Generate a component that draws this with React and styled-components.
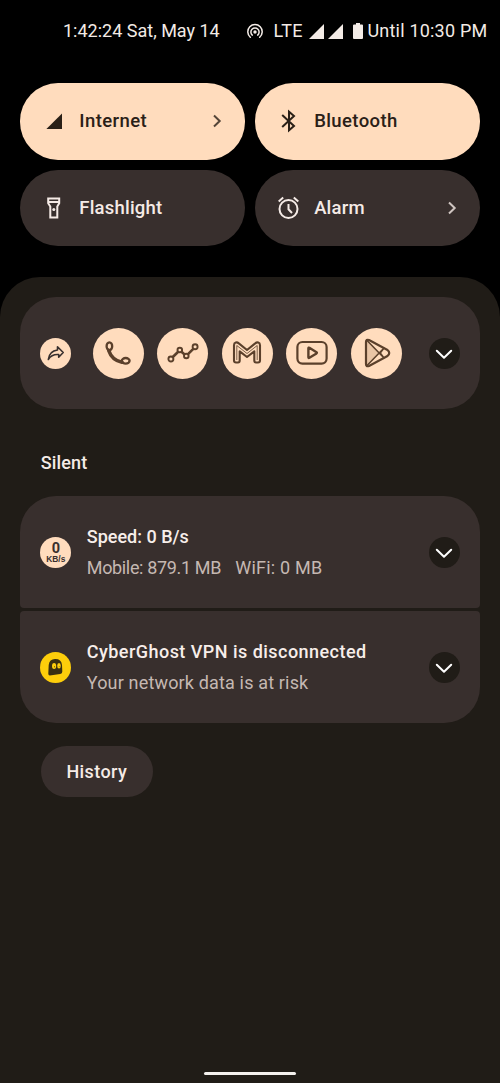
import styled, { createGlobalStyle } from "styled-components"

const GlobalStyle = createGlobalStyle`
*{
 box-sizing:border-box;
}
body{
 margin:0;
 background:#000;
 font-family:Roboto, "Liberation Sans", sans-serif;
}
svg{
 display:block;
 flex:none;
}
`
const Screen = styled.div`
width:500px;
height:1083px;
display:flex;
flex-direction:column;
overflow:hidden;
background:#000;
`
const StatusBar = styled.div`
height:62px;
padding:0 12px 0 63px;
display:flex;
align-items:center;
color:#f3ebe6;
`
const StatusText = styled.span`
width:${p => p.$width}px;
flex:none;
margin-right:${p => p.$gap || 0}px;
font-size:18px;
line-height:24px;
white-space:nowrap;
letter-spacing:${p => p.$spacing || 0}px;
`
const StatusIcons = styled.div`
display:flex;
align-items:center;
gap:4px;
margin-right:${p => p.$gap}px;
`
const Tiles = styled.div`
padding:21.3px 20.3px 0;
display:grid;
grid-template-columns:1fr 1fr;
grid-auto-rows:76.3px;
gap:10.3px;
`
const Tile = styled.button`
border:none;
border-radius:38px;
padding:0 22px 0 21.5px;
display:flex;
align-items:center;
font-family:inherit;
text-align:left;
background:${p => p.$active ? "#ffdcbd" : "#382f2d"};
color:${p => p.$active ? "#2a2017" : "#f5ebe6"};
`
const TileLabel = styled.span`
flex:1;
margin-left:13.5px;
font-size:18.5px;
font-weight:500;
line-height:24px;
letter-spacing:${p => p.$spacing || 0}px;
`
const Shade = styled.main`
flex:1;
margin-top:31px;
padding:20px 20.3px 0;
display:flex;
flex-direction:column;
border-radius:40px 40px 0 0;
background:#201c17;
`
const Card = styled.section`
height:112px;
padding:0 20px;
display:flex;
align-items:center;
border-radius:${p => p.$radius};
background:#382f2d;
`
const CardGroup = styled.div`
display:flex;
flex-direction:column;
gap:3px;
`
const Badge = styled.div`
width:31px;
height:31px;
flex:none;
display:flex;
flex-direction:column;
align-items:center;
justify-content:center;
border-radius:50%;
background:${p => p.$color || "#ffdcbd"};
color:#382f2d;
`
const SpeedValue = styled.span`
font-size:14.5px;
font-weight:700;
line-height:13px;
margin-top:2px;
`
const SpeedUnit = styled.span`
font-family:"Liberation Sans", sans-serif;
font-size:8.4px;
font-weight:700;
line-height:9px;
`
const Apps = styled.div`
flex:1;
display:flex;
gap:13.4px;
margin-left:21.7px;
`
const AppIcon = styled.div`
width:51px;
height:51px;
display:flex;
align-items:center;
justify-content:center;
border-radius:50%;
background:#ffdcbd;
color:#5b402b;
`
const Expand = styled.button`
width:31px;
height:31px;
flex:none;
padding:1px 0 0;
border:none;
border-radius:50%;
display:flex;
align-items:center;
justify-content:center;
background:#201c17;
color:#fff;
`
const SectionTitle = styled.h2`
margin:42px 0 0 20.5px;
height:45.3px;
font-size:18px;
font-weight:500;
line-height:24px;
color:#f5ebe6;
letter-spacing:.15px;
`
const Message = styled.div`
flex:1;
margin-left:15.5px;
white-space:nowrap;
`
const Title = styled.p`
margin:0;
font-size:18px;
font-weight:500;
line-height:30.5px;
color:#f7eeea;
letter-spacing:${p => p.$spacing || 0}px;
`
const Body = styled.p`
margin:0;
padding-top:1px;
display:flex;
gap:14px;
font-size:18px;
line-height:30px;
color:#c5b8b2;
letter-spacing:${p => p.$spacing || 0}px;
`
const BodyPart = styled.span`
width:${p => p.$width}px;
letter-spacing:${p => p.$spacing || 0}px;
`
const History = styled.button`
width:112.5px;
height:51px;
margin:22.8px 0 0 20.3px;
padding:0 0 1px;
border:none;
border-radius:26px;
font-family:inherit;
font-size:18px;
font-weight:500;
letter-spacing:.4px;
background:#382f2d;
color:#f5ebe6;
`
const HomeBar = styled.div`
width:92px;
height:3px;
margin:auto auto 8px;
border-radius:2px;
background:#f4f1ee;
`

const HotspotIcon = () => <svg width="18" height="18" viewBox="0 0 18 18" fill="none" stroke="currentColor" strokeWidth="1.5" strokeLinecap="round">
  <circle cx="9" cy="10" r="1.7" fill="currentColor" stroke="none"/>
  <path d="M6.3 13.1A4.1 4.1 0 1 1 11.7 13.1"/>
  <path d="M4.3 15.2A7.2 7.2 0 1 1 13.7 15.2"/>
</svg>

const SignalIcon = () => <svg width="15" height="15" viewBox="0 0 15 15" fill="currentColor">
  <path d="M15 0V15H0Z"/>
</svg>

const BatteryIcon = () => <svg width="10" height="16" viewBox="0 0 10 16" fill="currentColor">
  <path d="M3 0H7V1.5H9Q10 1.5 10 2.5V15Q10 16 9 16H1Q0 16 0 15V2.5Q0 1.5 1 1.5H3Z"/>
</svg>

const TileSignal = () => <svg width="24" height="24" viewBox="0 0 24 24" fill="currentColor">
  <path d="M20 4.6V20H4.4Z"/>
</svg>

const BluetoothIcon = () => <svg width="24" height="24" viewBox="0 0 24 24" fill="none" stroke="currentColor" strokeWidth="2">
  <path d="M5.2 6L17 17L12 21.3V2.7L17 7L5.2 18"/>
</svg>

const FlashlightIcon = () => <svg width="24" height="24" viewBox="0 0 24 24" fill="none" stroke="currentColor" strokeWidth="2">
  <path d="M6.2 2.5H17.2V7.3L15.3 10.5V21.5H8.3V10.5L6.2 7.3ZM6.2 6H17.2"/>
  <circle cx="11.8" cy="13.5" r="1.5" fill="currentColor" stroke="none"/>
</svg>

const AlarmIcon = () => <svg width="24" height="24" viewBox="0 0 24 24" fill="none" stroke="currentColor" strokeWidth="2">
  <circle cx="11.5" cy="13" r="9"/>
  <path d="M11.5 8V13.3L15 17M1.7 5.4L6.2 1.6M16.8 1.6L21.3 5.4"/>
</svg>

const ChevronRight = () => <svg width="12" height="16" viewBox="0 0 12 16" fill="none" stroke="currentColor" strokeWidth="2" opacity="0.8">
  <path d="M3 2.5L8.7 8L3 13.5"/>
</svg>

const ChevronDown = () => <svg width="20" height="14" viewBox="0 0 20 14" fill="none" stroke="currentColor" strokeWidth="2" strokeLinecap="round" strokeLinejoin="round">
  <path d="M2.8 3.7L10 10.7L17.2 3.7"/>
</svg>

const ShareIcon = () => <svg width="20" height="18" viewBox="0 0 20 18" fill="none" stroke="currentColor" strokeWidth="1.6" strokeLinejoin="round">
  <path d="M11.5 2.8L17.2 8.5L12.7 13.2V10.6C8 10.2 4.7 11.7 2.3 15.5C3 9.8 6.4 6.6 11.5 6Z"/>
</svg>

const PhoneIcon = () => <svg width="30" height="30" viewBox="0 0 30 30" fill="none" stroke="currentColor" strokeLinecap="round">
  <ellipse strokeWidth="2.3" cx="6.4" cy="8.3" rx="2.8" ry="3.9"/>
  <ellipse strokeWidth="2.3" cx="22.7" cy="22.8" rx="3.9" ry="2.8"/>
  <path strokeWidth="3.6" d="M5.7 12.5C7.8 18.8 11.7 22.8 19 24.3"/>
</svg>

const ActivityIcon = () => <svg width="32" height="24" viewBox="0 0 32 24" fill="none" stroke="currentColor" strokeWidth="1.9">
  <circle cx="3.9" cy="18" r="2.5"/>
  <circle cx="12.8" cy="9" r="2.3"/>
  <circle cx="19.3" cy="15" r="2.3"/>
  <circle cx="28.1" cy="5.8" r="2.5"/>
  <path strokeWidth="2.6" d="M5.8 16L11.2 10.7M14.5 10.7L17.6 13.4M21 13.2L26.3 7.8"/>
</svg>

const MailIcon = () => <svg width="30" height="26" viewBox="0 0 30 26" fill="none" stroke="currentColor" strokeLinejoin="round">
  <path strokeWidth="2.1" d="M2 5.2C2 2 5 1.8 6.8 3.4L15 10L23.2 3.4C25 1.8 28 2 28 5.2V20.5Q28 22.5 26 22.5H24Q22.3 22.5 22.3 20.5V11.3L15 17L7.7 11.3V20.5Q7.7 22.5 6 22.5H4Q2 22.5 2 20.5Z"/>
  <path strokeWidth="0.8" d="M4.8 20V5.5L15 13.5L25.2 5.5V20"/>
</svg>

const VideoIcon = () => <svg width="32" height="26" viewBox="0 0 32 26" fill="none" stroke="currentColor" strokeWidth="2.2" strokeLinejoin="round">
  <rect x="1.4" y="2" width="29.2" height="21.6" rx="5"/>
  <path strokeWidth="2.4" d="M12.4 8.3Q12.4 7.2 13.4 7.8L20.5 12.2Q21.3 12.8 20.5 13.4L13.4 17.8Q12.4 18.4 12.4 17.3Z"/>
</svg>

const StoreIcon = () => <svg width="32" height="30" viewBox="0 0 32 30" fill="none" stroke="currentColor" strokeWidth="2.2" strokeLinejoin="round" strokeLinecap="round">
  <path fill="#e9c5a5" stroke="none" d="M6 3L18.5 15L6 27Z"/>
  <path d="M6 4Q6 1 9 2L27.5 12Q31 15 27.5 18L9 28Q6 29 6 26Z"/>
  <path strokeWidth="1.6" d="M7 2.5L23.8 19.8M7 27.5L23.8 10.2M23.8 10.2L20.2 15L23.8 19.8"/>
</svg>

const GhostIcon = () => <svg width="17" height="19" viewBox="0 0 17 19">
  <path fill="#382f12" d="M2.8 17.5Q1.3 17.3 1.3 15.7L1.7 7Q2.5 1.2 8 1.1Q14.3 .9 15 7L15.3 13.5Q15.4 15.8 13.2 16.1Z"/>
  <ellipse cx="7.1" cy="8" rx="2.1" ry="3" fill="#fdce0b"/>
  <ellipse cx="12" cy="7.7" rx="1.8" ry="2.8" fill="#fdce0b"/>
  <circle cx="7.5" cy="8.7" r=".5" fill="#382f12"/>
  <circle cx="12.2" cy="8.3" r=".4" fill="#382f12"/>
</svg>

const tiles = [
  { label: "Internet", icon: TileSignal, active: true, arrow: true, spacing: 0.42 },
  { label: "Bluetooth", icon: BluetoothIcon, active: true, spacing: 0.4 },
  { label: "Flashlight", icon: FlashlightIcon, spacing: 0.2 },
  { label: "Alarm", icon: AlarmIcon, arrow: true, spacing: 0.2 },
]
const apps = [PhoneIcon, ActivityIcon, MailIcon, VideoIcon, StoreIcon]

const ExpandButton = () => <Expand aria-label="Expand"><ChevronDown/></Expand>

const App = () => {
  return <>
    <GlobalStyle/>
    <Screen>
      <StatusBar>
        <StatusText $width={158} $gap={25}>1:42:24 Sat, May 14</StatusText>
        <HotspotIcon/>
        <StatusIcons $gap={9.5}/>
        <StatusText $width={30} $gap={5.5} $spacing={0.4}>LTE</StatusText>
        <StatusIcons $gap={9.5}>
          <SignalIcon/>
          <SignalIcon/>
        </StatusIcons>
        <StatusIcons $gap={5}><BatteryIcon/></StatusIcons>
        <StatusText $width={120} $spacing={0.2}>Until 10:30 PM</StatusText>
      </StatusBar>
      <Tiles>
        {tiles.map(({ label, icon: Icon, active, arrow, spacing }) => <Tile key={label} $active={active}>
          <Icon/>
          <TileLabel $spacing={spacing}>{label}</TileLabel>
          {arrow ? <ChevronRight/> : null}
        </Tile>)}
      </Tiles>
      <Shade>
        <Card $radius="36px">
          <Badge><ShareIcon/></Badge>
          <Apps>
            {apps.map((Icon, i) => <AppIcon key={i}><Icon/></AppIcon>)}
          </Apps>
          <ExpandButton/>
        </Card>
        <SectionTitle>Silent</SectionTitle>
        <CardGroup>
          <Card $radius="36px 36px 4px 4px">
            <Badge>
              <SpeedValue>0</SpeedValue>
              <SpeedUnit>KB/s</SpeedUnit>
            </Badge>
            <Message>
              <Title>Speed: 0 B/s</Title>
              <Body>
                <BodyPart $width={134.5} $spacing={-0.35}>Mobile: 879.1 MB</BodyPart>
                <BodyPart $spacing={0.2}>WiFi: 0 MB</BodyPart>
              </Body>
            </Message>
            <ExpandButton/>
          </Card>
          <Card $radius="4px 4px 36px 36px">
            <Badge $color="#fdce0b"><GhostIcon/></Badge>
            <Message>
              <Title $spacing={0.46}>CyberGhost VPN is disconnected</Title>
              <Body $spacing={0.16}>Your network data is at risk</Body>
            </Message>
            <ExpandButton/>
          </Card>
        </CardGroup>
        <History>History</History>
        <HomeBar/>
      </Shade>
    </Screen>
  </>
}
export default App
